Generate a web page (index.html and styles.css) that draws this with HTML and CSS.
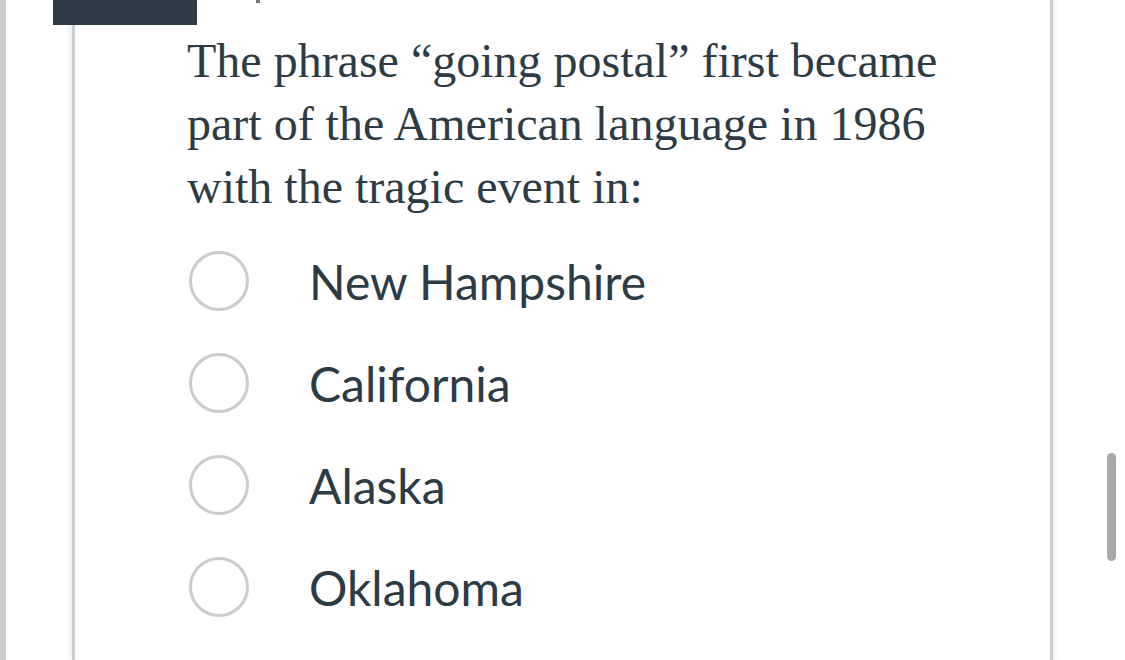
FILE: index.html
```html
<!DOCTYPE html>
<html lang="en">
<head>
<meta charset="utf-8">
<title>Quiz question</title>
<link rel="stylesheet" href="styles.css">
</head>
<body>
<div class="page">
  <div class="edge"></div>
  <div class="stage">
    <div class="card">
      <p class="question">The phrase “going postal” first became part of the American language in 1986 with the tragic event in:</p>
      <ul class="answers">
        <li class="answer"><span class="radio"></span><span class="label">New Hampshire</span></li>
        <li class="answer"><span class="radio"></span><span class="label">California</span></li>
        <li class="answer"><span class="radio"></span><span class="label">Alaska</span></li>
        <li class="answer"><span class="radio"></span><span class="label">Oklahoma</span></li>
      </ul>
    </div>
    <div class="tab"></div>
    <div class="tick"></div>
    <div class="scroll-thumb"></div>
  </div>
</div>
</body>
</html>
```

FILE: styles.css
```css
html, body {
  margin: 0;
  padding: 0;
  background: #ffffff;
  height: 100%;
  overflow: hidden;
}

.page {
  display: flex;
  height: 660px;
}

.edge {
  width: 6px;
  background: #c8cdd1;
  flex: none;
}

.stage {
  position: relative;
  flex: 1;
  padding-left: 66px;
}

.card {
  box-sizing: border-box;
  width: 981px;
  height: 660px;
  background: #ffffff;
  border-left: 3px solid #c8cdd1;
  border-right: 3px solid #c8cdd1;
  box-shadow: -3px 0 4px rgba(0, 0, 0, 0.06), 3px 0 4px rgba(0, 0, 0, 0.06);
  padding: 29px 0 0 112px;
  color: #2d3b45;
}

.question {
  margin: 0;
  font-family: "Liberation Serif", "Times New Roman", serif;
  font-size: 48px;
  line-height: 63px;
  width: 790px;
}

.answers {
  list-style: none;
  margin: 12px 0 0 0;
  padding: 0 0 0 2px;
}

.answer {
  display: flex;
  align-items: center;
  height: 102px;
}

.radio {
  width: 60px;
  height: 60px;
  box-sizing: border-box;
  border: 3px solid #c8cdd1;
  border-radius: 50%;
  flex: none;
}

.label {
  margin-left: 60px;
  font-family: Lato, "Noto Sans", sans-serif;
  font-size: 48px;
  color: #2d3b45;
}

.tab {
  position: absolute;
  left: 47px;
  top: 0;
  width: 144px;
  height: 25px;
  background: #2d3b45;
}

.tick {
  position: absolute;
  left: 250px;
  top: 0;
  width: 4px;
  height: 3px;
  background: #6b7780;
}

.scroll-thumb {
  position: absolute;
  left: 1101px;
  top: 453px;
  width: 9px;
  height: 108px;
  border-radius: 5px;
  background: #a8a8a8;
}
```
